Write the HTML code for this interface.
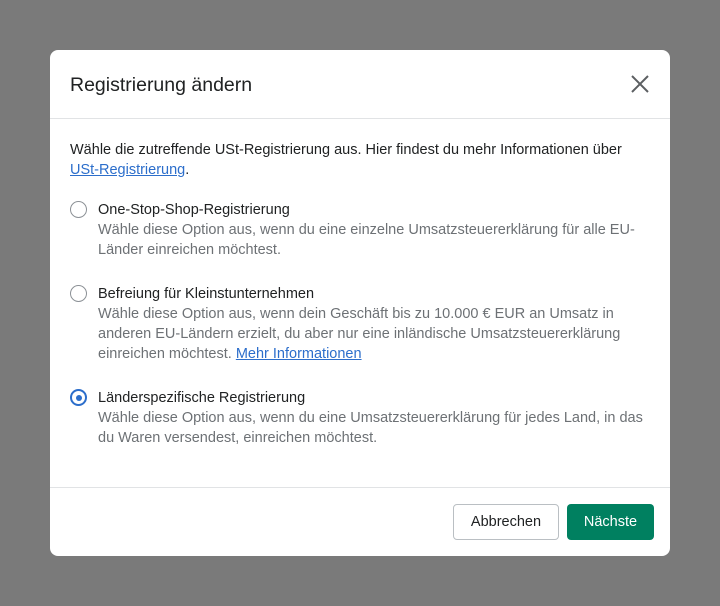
<!DOCTYPE html>
<html><head><meta charset="utf-8"><style>
html,body{margin:0;padding:0;width:720px;height:606px;background:#7a7a7a;font-family:"Liberation Sans",sans-serif;overflow:hidden}
.m{position:absolute;left:50px;top:50px;width:620px;height:506px;background:#fff;border-radius:8px;overflow:hidden}
.hd{position:absolute;left:0;top:0;width:620px;height:68px;border-bottom:1px solid #e1e3e5}
.hd h1{position:absolute;left:20px;top:24px;margin:0;font-size:19.5px;font-weight:normal;color:#202223}
.x{position:absolute;left:580px;top:24px}
.t{position:absolute;left:20px;font-size:14.5px;line-height:20px;color:#202223;white-space:nowrap}
.g{color:#6d7175}
a{color:#2c6ecb;text-decoration:underline}
.r{position:absolute;left:20px;width:17px;height:17px;border:1.5px solid #8c9196;border-radius:50%;box-sizing:border-box}
.r.on{border:2px solid #2c6ecb}
.r.on:after{content:"";position:absolute;left:3.5px;top:3.5px;width:6px;height:6px;border-radius:50%;background:#2c6ecb}
.ft{position:absolute;left:0;top:437px;width:620px;border-top:1px solid #e1e3e5}
.b{position:absolute;top:454px;height:36px;box-sizing:border-box;border-radius:4px;font-size:14.5px;line-height:35px;text-align:center}
</style></head><body>
<div class="m">
<div class="hd"><h1>Registrierung ändern</h1>
<svg class="x" width="20" height="20" viewBox="0 0 20 20"><path d="M2 2L18 18M18 2L2 18" stroke="#5c5f62" stroke-width="2" fill="none"/></svg></div>
<div class="t" style="top:90px;width:580px">Wähle die zutreffende USt-Registrierung aus. Hier findest du mehr Informationen über<br><a>USt-Registrierung</a>.</div>
<div class="r" style="top:151px"></div>
<div class="t" style="left:48px;top:150px;width:560px">One-Stop-Shop-Registrierung<br><span class="g">Wähle diese Option aus, wenn du eine einzelne Umsatzsteuererklärung für alle EU-<br>Länder einreichen möchtest.</span></div>
<div class="r" style="top:235px"></div>
<div class="t" style="left:48px;top:234px;width:560px">Befreiung für Kleinstunternehmen<br><span class="g">Wähle diese Option aus, wenn dein Geschäft bis zu 10.000 € EUR an Umsatz in<br>anderen EU-Ländern erzielt, du aber nur eine inländische Umsatzsteuererklärung<br>einreichen möchtest. <a>Mehr Informationen</a></span></div>
<div class="r on" style="top:339px"></div>
<div class="t" style="left:48px;top:338px;width:560px">Länderspezifische Registrierung<br><span class="g">Wähle diese Option aus, wenn du eine Umsatzsteuererklärung für jedes Land, in das<br>du Waren versendest, einreichen möchtest.</span></div>
<div class="ft"></div>
<div class="b" style="left:403px;width:106px;border:1px solid #babfc3;color:#202223;background:#fff">Abbrechen</div>
<div class="b" style="left:517px;width:87px;background:#008060;color:#fff;line-height:37px">Nächste</div>
</div>
</body></html>
